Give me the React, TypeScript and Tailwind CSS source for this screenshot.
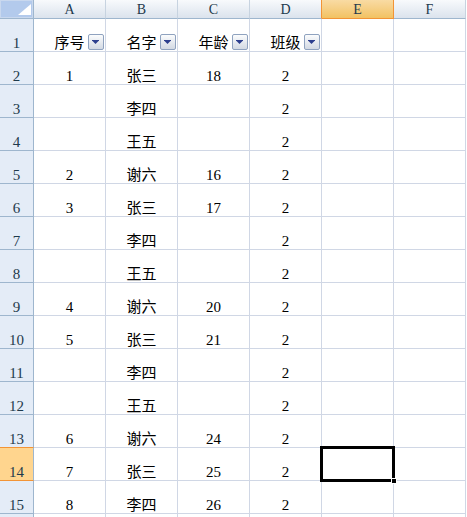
import React from 'react';

const COLS = ['A', 'B', 'C', 'D', 'E', 'F'];

const DATA: string[][] = [
  ['序号', '名字', '年龄', '班级'],
  ['1', '张三', '18', '2'],
  ['', '李四', '', '2'],
  ['', '王五', '', '2'],
  ['2', '谢六', '16', '2'],
  ['3', '张三', '17', '2'],
  ['', '李四', '', '2'],
  ['', '王五', '', '2'],
  ['4', '谢六', '20', '2'],
  ['5', '张三', '21', '2'],
  ['', '李四', '', '2'],
  ['', '王五', '', '2'],
  ['6', '谢六', '24', '2'],
  ['7', '张三', '25', '2'],
  ['8', '李四', '26', '2'],
  ['', '', '', ''],
];

function Dropdown() {
  return (
    <div className="absolute right-[1px] bottom-[1px] w-[16px] h-[16px] rounded-[2px] border border-[#8fa2bf] bg-linear-to-b from-[#fbfcfd] to-[#d3d9e3] flex items-center justify-center">
      <svg width="8" height="5" viewBox="0 0 8 5">
        <rect x="0" y="0" width="7" height="1" fill="#2d3f8e" />
        <path d="M0.5 1 L6.5 1 L3.5 4 Z" fill="#2d3f8e" />
      </svg>
    </div>
  );
}

export default function App() {
  return (
    <div className="relative w-[467px] h-[517px] overflow-hidden bg-white font-['Liberation_Serif','Noto_Sans_CJK_SC',serif] text-black">
      {/* column header row */}
      <div className="flex h-[19px]">
        <div className="relative w-[34px] h-[19px] border-r border-b border-[#9eb6ce] bg-[#b3caec] shrink-0">
          <div className="absolute inset-0 border border-[#c9d8ee]" />
          <svg className="absolute left-[18px] top-[4px]" width="13" height="11" viewBox="0 0 13 11">
            <path d="M13 0 L13 11 L0 11 Z" fill="#ffffff" />
          </svg>
        </div>
        {COLS.map((c) => {
          const sel = c === 'E';
          const prevSel = c === 'D';
          return (
            <div
              key={c}
              className={
                sel
                  ? 'w-[72px] h-[19px] shrink-0 border-r border-b border-[#f29436] bg-linear-to-b from-[#f9dba3] to-[#f2c262] flex items-center justify-center text-[14px] leading-[18px] pt-[1px] text-[#1e3a4c]'
                  : prevSel
                  ? 'w-[72px] h-[19px] shrink-0 border-r border-[#f29436] border-b-[1px] [border-bottom-color:#9eb6ce] bg-linear-to-b from-[#f8fafc] to-[#dbe3ed] flex items-center justify-center text-[14px] leading-[18px] pt-[1px] text-[#1e3a4c]'
                  : 'w-[72px] h-[19px] shrink-0 border-r border-b border-r-[#c7d3e0] border-b-[#9eb6ce] bg-linear-to-b from-[#f8fafc] to-[#dbe3ed] flex items-center justify-center text-[14px] leading-[18px] pt-[1px] text-[#1e3a4c]'
              }
            >
              {c}
            </div>
          );
        })}
      </div>

      {DATA.map((row, ri) => {
        const rowNum = ri + 1;
        const sel = rowNum === 14;
        const beforeSel = rowNum === 13;
        return (
          <div key={ri} className="flex h-[33px]">
            <div
              className={
                sel
                  ? 'w-[34px] h-[33px] shrink-0 border-r border-b border-r-[#9eb6ce] border-b-[#f29436] bg-[#ffd58e] flex items-end justify-center text-[15px] leading-[15px] text-[#1e3a4c]'
                  : beforeSel
                  ? 'w-[34px] h-[33px] shrink-0 border-r border-b border-r-[#9eb6ce] border-b-[#f29436] bg-[#e4ecf7] flex items-end justify-center text-[15px] leading-[15px] text-[#1e3a4c]'
                  : 'w-[34px] h-[33px] shrink-0 border-r border-b border-[#9eb6ce] bg-[#e4ecf7] flex items-end justify-center text-[15px] leading-[15px] text-[#1e3a4c]'
              }
            >
              {rowNum <= 15 ? rowNum : ''}
            </div>
            {COLS.map((c, ci) => {
              const v = row[ci] ?? '';
              return (
                <div
                  key={c}
                  className="relative w-[72px] h-[33px] shrink-0 border-r border-b border-[#d0d7e5] flex items-end justify-center text-[15px] leading-[15px]"
                >
                  {v}
                  {ri === 0 && ci < 4 && <Dropdown />}
                </div>
              );
            })}
          </div>
        );
      })}

      {/* selection box on E14 */}
      <div className="absolute left-[320px] top-[446px] w-[75px] h-[36px] border-[3px] border-black">
        <div className="absolute right-[-5px] bottom-[-5px] w-[6px] h-[6px] bg-black border border-white" />
      </div>
    </div>
  );
}
